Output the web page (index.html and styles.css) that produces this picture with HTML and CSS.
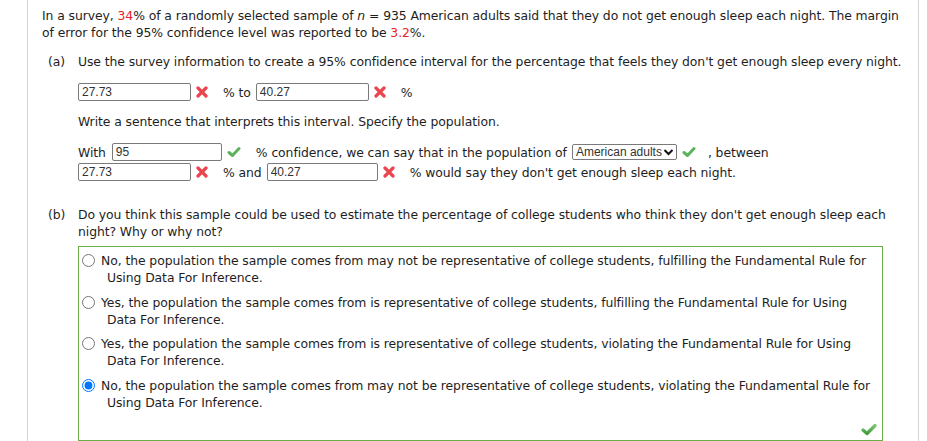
FILE: index.html
```html
<!DOCTYPE html>
<html>
<head>
<meta charset="utf-8">
<link rel="stylesheet" href="styles.css">
</head>
<body>
<div class="frame">
  <p class="intro">In a survey, <span class="red">34</span>% of a randomly selected sample of <i>n</i> = 935 American adults said that they do not get enough sleep each night. The margin<br>of error for the 95% confidence level was reported to be <span class="red">3.2</span>%.</p>

  <div class="part part-a">
    <span class="label">(a)</span>
    <div class="body">
      <p class="line">Use the survey information to create a 95% confidence interval for the percentage that feels they don't get enough sleep every night.</p>
      <div class="row row-first">
        <input class="field" type="text" value="27.73">
        <span class="icon"><svg width="12" height="12" viewBox="0 0 12 12"><path d="M2 2 L10 10 M10 2 L2 10" class="xmark"/></svg></span>
        <span>% to</span>
        <input class="field field-gap" type="text" value="40.27">
        <span class="icon"><svg width="12" height="12" viewBox="0 0 12 12"><path d="M2 2 L10 10 M10 2 L2 10" class="xmark"/></svg></span>
        <span>%</span>
      </div>
      <p class="line line-write">Write a sentence that interprets this interval. Specify the population.</p>
      <div class="rows">
        <div class="row">
          <span>With</span>
          <input class="field field-gap field-short" type="text" value="95">
          <span class="icon"><svg width="14" height="12" viewBox="0 0 14 12"><polyline points="2,6.5 5.5,9.5 12,2.5" class="check"/></svg></span>
          <span>% confidence, we can say that in the population of</span>
          <span class="select">American adults<svg width="11" height="8" viewBox="0 0 11 8"><polyline points="1.5,2 5.5,6 9.5,2" class="chev"/></svg></span>
          <span class="icon"><svg width="14" height="12" viewBox="0 0 14 12"><polyline points="2,6.5 5.5,9.5 12,2.5" class="check"/></svg></span>
          <span class="between">, between</span>
        </div>
        <div class="row">
          <input class="field" type="text" value="27.73">
          <span class="icon"><svg width="12" height="12" viewBox="0 0 12 12"><path d="M2 2 L10 10 M10 2 L2 10" class="xmark"/></svg></span>
          <span>% and</span>
          <input class="field field-gap field-mid" type="text" value="40.27">
          <span class="icon"><svg width="12" height="12" viewBox="0 0 12 12"><path d="M2 2 L10 10 M10 2 L2 10" class="xmark"/></svg></span>
          <span>% would say they don't get enough sleep each night.</span>
        </div>
      </div>
    </div>
  </div>

  <div class="part part-b">
    <span class="label">(b)</span>
    <div class="body">
      <p class="line">Do you think this sample could be used to estimate the percentage of college students who think they don't get enough sleep each<br>night? Why or why not?</p>
      <div class="choices">
        <label class="opt"><input type="radio" name="b"><span>No, the population the sample comes from may not be representative of college students, fulfilling the Fundamental Rule for<br>Using Data For Inference.</span></label>
        <label class="opt"><input type="radio" name="b"><span>Yes, the population the sample comes from is representative of college students, fulfilling the Fundamental Rule for Using<br>Data For Inference.</span></label>
        <label class="opt"><input type="radio" name="b"><span>Yes, the population the sample comes from is representative of college students, violating the Fundamental Rule for Using<br>Data For Inference.</span></label>
        <label class="opt"><input type="radio" name="b" checked><span>No, the population the sample comes from may not be representative of college students, violating the Fundamental Rule for<br>Using Data For Inference.</span></label>
        <div class="feedback"><svg width="16" height="13" viewBox="0 0 16 13"><defs><linearGradient id="g" x1="0" y1="0" x2="0" y2="1"><stop offset="0" stop-color="#7cc576"/><stop offset="1" stop-color="#3f9c3a"/></linearGradient></defs><polyline points="2,7 6,10.5 14,2.5" fill="none" stroke="url(#g)" stroke-width="3.2" stroke-linecap="round" stroke-linejoin="round"/></svg></div>
      </div>
    </div>
  </div>
</div>
</body>
</html>
```

FILE: styles.css
```css
html, body {
  margin: 0;
  padding: 0;
  background: #fff;
}

body {
  font-family: "DejaVu Sans", Verdana, sans-serif;
  font-size: 12.4px;
  letter-spacing: -0.08px;
  line-height: 17px;
  color: #1e1e1e;
}

.frame {
  margin-left: 27px;
  width: 892px;
  min-height: 441px;
  box-sizing: border-box;
  border-left: 1px solid #d4d4d4;
  border-right: 1px solid #d4d4d4;
  padding: 7px 14px 0 14px;
}

p {
  margin: 0;
}

.intro,
.line,
.opt span {
  white-space: nowrap;
}

.red {
  color: #e8232a;
}

.part {
  display: grid;
  grid-template-columns: 30px 1fr;
  padding-left: 6px;
}

.part-a {
  margin-top: 12px;
}

.part-b {
  margin-top: 25px;
}

.row {
  display: flex;
  align-items: center;
  height: 18px;
  white-space: nowrap;
}

.row-first {
  margin-top: 13px;
}

.line-write {
  margin-top: 12px;
}

.rows {
  margin-top: 13px;
  display: flex;
  flex-direction: column;
  gap: 2px;
}

.field {
  width: 113px;
  height: 18px;
  box-sizing: border-box;
  margin: 0;
  padding: 0 3px;
  border: 1px solid #7a7a7a;
  border-radius: 2px;
  font-family: "Liberation Sans", Arial, sans-serif;
  font-size: 12px;
  letter-spacing: 0;
  color: #333;
  background: #fff;
}

.field-gap {
  margin-left: 5px;
}

.field-short {
  width: 110px;
  margin-left: 6px;
}

.field-mid {
  width: 111px;
}

.icon {
  display: inline-flex;
  align-items: center;
  margin-left: 5px;
  margin-right: 15px;
}

.xmark {
  stroke: #ea4650;
  stroke-width: 3.2;
  stroke-linecap: round;
  fill: none;
}

.check {
  stroke: #5cb35a;
  stroke-width: 3;
  stroke-linecap: round;
  stroke-linejoin: round;
  fill: none;
}

.select {
  display: inline-flex;
  align-items: center;
  gap: 1px;
  width: 105px;
  height: 16px;
  box-sizing: border-box;
  margin-left: 5px;
  padding: 0 1px 0 3px;
  border: 1px solid #7a7a7a;
  border-radius: 2px;
  font-family: "Liberation Sans", Arial, sans-serif;
  font-size: 12px;
  letter-spacing: 0;
  color: #333;
}

.chev {
  stroke: #111;
  stroke-width: 2;
  fill: none;
}

.between {
  margin-left: -3px;
}

.choices {
  margin-top: 6px;
  width: 805px;
  box-sizing: border-box;
  border: 1px solid #6aad45;
  padding: 5px 0 4px 3px;
}

.opt {
  display: flex;
  align-items: flex-start;
  margin-bottom: 7.5px;
}

.opt input {
  margin: 2px 6px 0 0;
  width: 13px;
  height: 13px;
  flex: none;
}

.opt span {
  padding-left: 6px;
  text-indent: -6px;
}

.feedback {
  display: flex;
  justify-content: flex-end;
  margin-top: 12px;
  padding-right: 5px;
}
```
